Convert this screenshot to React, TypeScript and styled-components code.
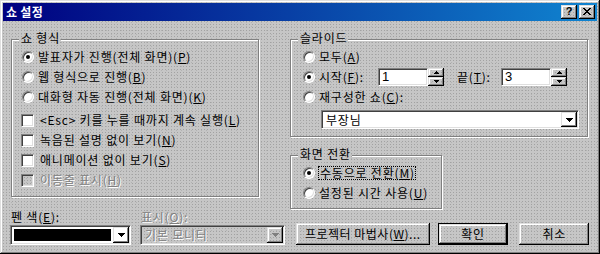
import React from 'react';
import styled, { createGlobalStyle, css } from 'styled-components';

const FONT = `"Noto Sans CJK KR", "Noto Sans", "DejaVu Sans", sans-serif`;

const GlobalStyle = createGlobalStyle`
  html, body {
    margin: 0;
    padding: 0;
    background: #c0c0c0;
  }
  body {
    font-family: ${FONT};
    font-size: 12px;
    letter-spacing: 0.8px;
    color: #000;
  }
`;

// dithered dialog face, fixed so every layer lines up
const dither = css`
  background-color: #c6c6c6;
  background-image:
    conic-gradient(from 270deg at 1px 1px, #a2a2a2 90deg, transparent 0),
    conic-gradient(from 270deg at 1px 1px, #b2b2b2 90deg, transparent 0);
  background-size: 3px 3px, 5px 4px;
  background-position: 0 0, 1px 2px;
  background-attachment: fixed;
`;

const sunken = css`
  box-sizing: border-box;
  border: 1px solid;
  border-color: #808080 #fff #fff #808080;
  box-shadow: inset 1px 1px 0 #404040, inset -1px -1px 0 #dfdfdf;
`;

const raised = css`
  box-sizing: border-box;
  box-shadow: inset -1px -1px 0 #000, inset 1px 1px 0 #dfdfdf,
    inset -2px -2px 0 #808080, inset 2px 2px 0 #fff;
`;

const Window = styled.div`
  ${dither};
  position: relative;
  box-sizing: border-box;
  width: 600px;
  height: 254px;
  padding: 3px;
  box-shadow: inset -1px -1px 0 #000, inset 1px 1px 0 #dfdfdf,
    inset -2px -2px 0 #808080, inset 2px 2px 0 #fff;
`;

const TitleBar = styled.div`
  display: flex;
  align-items: center;
  justify-content: space-between;
  height: 18px;
  padding: 0 2px 0 3px;
  background: linear-gradient(90deg, #000080 0%, #0a4fae 60%, #1084d0 100%);
`;

const TitleText = styled.span`
  color: #fff;
  font-weight: bold;
  font-size: 12px;
  line-height: 14px;
  letter-spacing: 0.3px;
`;

const CaptionButtons = styled.div`
  display: flex;
  gap: 2px;
`;

const CaptionButton = styled.div`
  ${raised};
  ${dither};
  width: 16px;
  height: 14px;
  display: flex;
  align-items: center;
  justify-content: center;
  font-family: "Liberation Sans", sans-serif;
  font-weight: bold;
  font-size: 11px;
  line-height: 11px;
  letter-spacing: 0;
  padding-bottom: 1px;
`;

const Body = styled.div`
  display: flex;
  padding: 18px 0 0 8px;
`;

const Column = styled.div<{ $w: number; $ml?: number }>`
  display: flex;
  flex-direction: column;
  width: ${p => p.$w}px;
  margin-left: ${p => p.$ml ?? 0}px;
`;

const Group = styled.div<{ $w: number; $h: number; $pl: number; $mt?: number }>`
  position: relative;
  box-sizing: border-box;
  width: ${p => p.$w}px;
  height: ${p => p.$h}px;
  margin-top: ${p => p.$mt ?? 0}px;
  padding: 7px 0 0 ${p => p.$pl}px;
  border: 1px solid #808080;
  box-shadow: inset 1px 1px 0 #fff, 1px 1px 0 #fff;
`;

const Legend = styled.span`
  ${dither};
  position: absolute;
  top: -9px;
  left: 7px;
  padding: 0 1px 0 2px;
  line-height: 14px;
`;

const Row = styled.div<{ $mt?: number; $ml?: number }>`
  display: flex;
  align-items: center;
  height: 20px;
  margin-top: ${p => p.$mt ?? 0}px;
  margin-left: ${p => p.$ml ?? 0}px;
  line-height: 14px;
  white-space: nowrap;
`;

const Label = styled.span<{ $disabled?: boolean; $w?: number; $ml?: number }>`
  margin-left: ${p => p.$ml ?? 4}px;
  ${p => p.$w !== undefined && css`width: ${p.$w}px;`}
  color: ${p => (p.$disabled ? '#808080' : '#000')};
  text-shadow: ${p => (p.$disabled ? '1px 1px 0 #fff' : 'none')};
  flex: none;
`;

const FocusLabel = styled.span`
  margin-left: 3px;
  padding: 0 0 0 1px;
  border: 1px dotted #000;
  line-height: 12px;
`;

const RadioCircle = styled.span<{ $checked?: boolean }>`
  box-sizing: border-box;
  flex: none;
  width: 12px;
  height: 12px;
  border-radius: 50%;
  border: 1px solid;
  border-color: #808080 #fff #fff #808080;
  background: #fff;
  box-shadow: inset 1px 1px 0 #404040, inset -1px -1px 0 #dfdfdf;
  display: flex;
  align-items: center;
  justify-content: center;
  &::after {
    content: '';
    display: ${p => (p.$checked ? 'block' : 'none')};
    width: 4px;
    height: 4px;
    border-radius: 50%;
    background: #000;
  }
`;

const CheckBox = styled.span<{ $disabled?: boolean }>`
  ${sunken};
  flex: none;
  width: 13px;
  height: 13px;
  background: ${p => (p.$disabled ? 'transparent' : '#fff')};
`;

const Edit = styled.div<{ $w: number }>`
  ${sunken};
  width: ${p => p.$w}px;
  height: 18px;
  background: #fff;
  padding-left: 3px;
  line-height: 15px;
  font-family: "Liberation Sans", sans-serif;
  font-size: 13px;
`;

const Spin = styled.div`
  display: flex;
  flex-direction: column;
  width: 16px;
  height: 18px;
`;

const SpinHalf = styled.div`
  ${raised};
  flex: 1;
  display: flex;
  align-items: center;
  justify-content: center;
`;

const Combo = styled.div<{ $w: number; $h: number; $disabled?: boolean; $ml?: number; $mt?: number }>`
  ${sunken};
  display: flex;
  width: ${p => p.$w}px;
  height: ${p => p.$h}px;
  margin-left: ${p => p.$ml ?? 0}px;
  margin-top: ${p => p.$mt ?? 0}px;
  padding: 1px;
  background: ${p => (p.$disabled ? 'transparent' : '#fff')};
`;

const ComboText = styled.span<{ $disabled?: boolean }>`
  flex: 1;
  padding-left: 3px;
  line-height: 15px;
  color: ${p => (p.$disabled ? '#808080' : '#000')};
  text-shadow: ${p => (p.$disabled ? '1px 1px 0 #fff' : 'none')};
  white-space: nowrap;
`;

const Swatch = styled.span<{ $color: string }>`
  flex: 1;
  margin: 2px;
  background: ${p => p.$color};
`;

const DropButton = styled.span`
  ${raised};
  width: 16px;
  flex: none;
  display: flex;
  align-items: center;
  justify-content: center;
`;

const FieldRow = styled.div`
  display: flex;
  gap: 9px;
  margin: 13px 0 0 -1px;
`;

const Field = styled.div`
  display: flex;
  flex-direction: column;
`;

const FieldLabel = styled.span<{ $disabled?: boolean }>`
  line-height: 14px;
  padding-left: 1px;
  color: ${p => (p.$disabled ? '#808080' : '#000')};
  text-shadow: ${p => (p.$disabled ? '1px 1px 0 #fff' : 'none')};
`;

const ButtonRow = styled.div`
  display: flex;
  margin-top: 14px;
  padding-left: 6px;
`;

const Button = styled.div<{ $w: number; $ml?: number; $default?: boolean }>`
  ${raised};
  width: ${p => p.$w}px;
  height: 22px;
  margin-left: ${p => p.$ml ?? 0}px;
  display: flex;
  align-items: center;
  justify-content: center;
  line-height: 14px;
  letter-spacing: 0.5px;
  ${p =>
    p.$default &&
    css`
      border: 1px solid #000;
    `}
`;

const DownArrow = ({ color = '#000' }: { color?: string }) => (
  <svg width="7" height="4" viewBox="0 0 7 4">
    <path d="M0 0h7L3.5 4z" fill={color} shapeRendering="crispEdges" />
  </svg>
);

const TinyArrow = ({ up }: { up?: boolean }) => (
  <svg width="5" height="3" viewBox="0 0 5 3">
    <path d={up ? 'M2.5 0L5 3H0z' : 'M0 0h5L2.5 3z'} fill="#000" shapeRendering="crispEdges" />
  </svg>
);

const CloseGlyph = () => (
  <svg width="8" height="7" viewBox="0 0 8 7">
    <path d="M0 0h2l2 2.5L6 0h2L5 3.5 8 7H6L4 4.5 2 7H0l3-3.5z" fill="#000" shapeRendering="crispEdges" />
  </svg>
);

const Spinner = () => (
  <Spin>
    <SpinHalf>
      <TinyArrow up />
    </SpinHalf>
    <SpinHalf>
      <TinyArrow />
    </SpinHalf>
  </Spin>
);

const Radio = ({ checked, children }: { checked?: boolean; children: React.ReactNode }) => (
  <>
    <RadioCircle $checked={checked} />
    <Label>{children}</Label>
  </>
);

const App = () => {
  return (
    <>
      <GlobalStyle />
      <Window>
        <TitleBar>
          <TitleText>쇼 설정</TitleText>
          <CaptionButtons>
            <CaptionButton>?</CaptionButton>
            <CaptionButton>
              <CloseGlyph />
            </CaptionButton>
          </CaptionButtons>
        </TitleBar>

        <Body>
          <Column $w={274}>
            <Group $w={248} $h={158} $pl={10}>
              <Legend>쇼 형식</Legend>
              <Row>
                <Radio checked>
                  발표자가 진행(전체 화면)(<u>P</u>)
                </Radio>
              </Row>
              <Row>
                <Radio>
                  웹 형식으로 진행(<u>B</u>)
                </Radio>
              </Row>
              <Row>
                <Radio>
                  대화형 자동 진행(전체 화면)(<u>K</u>)
                </Radio>
              </Row>
              <Row $mt={3} $ml={-1}>
                <CheckBox />
                <Label $ml={6}>
                  &lt;Esc&gt; 키를 누를 때까지 계속 실행(<u>L</u>)
                </Label>
              </Row>
              <Row $ml={-1}>
                <CheckBox />
                <Label $ml={6}>
                  녹음된 설명 없이 보기(<u>N</u>)
                </Label>
              </Row>
              <Row $ml={-1}>
                <CheckBox />
                <Label $ml={6}>
                  애니메이션 없이 보기(<u>S</u>)
                </Label>
              </Row>
              <Row $ml={-1}>
                <CheckBox $disabled />
                <Label $ml={6} $disabled>
                  이동줄 표시(<u>H</u>)
                </Label>
              </Row>
            </Group>

            <FieldRow>
              <Field>
                <FieldLabel>
                  펜 색(<u>E</u>):
                </FieldLabel>
                <Combo $w={121} $h={20} $mt={1}>
                  <Swatch $color="#000" />
                  <DropButton>
                    <DownArrow />
                  </DropButton>
                </Combo>
              </Field>
              <Field>
                <FieldLabel $disabled>
                  표시(<u>O</u>):
                </FieldLabel>
                <Combo $w={145} $h={20} $mt={1} $disabled>
                  <ComboText $disabled>기본 모니터</ComboText>
                  <DropButton>
                    <DownArrow color="#808080" />
                  </DropButton>
                </Combo>
              </Field>
            </FieldRow>
          </Column>

          <Column $w={299} $ml={5}>
            <Group $w={298} $h={98} $pl={12}>
              <Legend>슬라이드</Legend>
              <Row>
                <Radio>
                  모두(<u>A</u>)
                </Radio>
              </Row>
              <Row>
                <RadioCircle $checked />
                <Label $w={59}>
                  시작(<u>F</u>):
                </Label>
                <Edit $w={50}>1</Edit>
                <Spinner />
                <Label $w={44} $ml={13}>
                  끝(<u>T</u>):
                </Label>
                <Edit $w={50}>3</Edit>
                <Spinner />
              </Row>
              <Row>
                <Radio>
                  재구성한 쇼(<u>C</u>):
                </Radio>
              </Row>
              <Combo $w={258} $h={19} $ml={18} $mt={3}>
                <ComboText>부장님</ComboText>
                <DropButton>
                  <DownArrow />
                </DropButton>
              </Combo>
            </Group>

            <Group $w={152} $h={54} $pl={12} $mt={18}>
              <Legend>화면 전환</Legend>
              <Row>
                <RadioCircle $checked />
                <FocusLabel>
                  수동으로 전환(<u>M</u>)
                </FocusLabel>
              </Row>
              <Row>
                <Radio>
                  설정된 시간 사용(<u>U</u>)
                </Radio>
              </Row>
            </Group>

            <ButtonRow>
              <Button $w={134}>
                프로젝터 마법사(<u>W</u>)...
              </Button>
              <Button $w={71} $ml={8} $default>
                확인
              </Button>
              <Button $w={70} $ml={11}>
                취소
              </Button>
            </ButtonRow>
          </Column>
        </Body>
      </Window>
    </>
  );
};

export default App;
